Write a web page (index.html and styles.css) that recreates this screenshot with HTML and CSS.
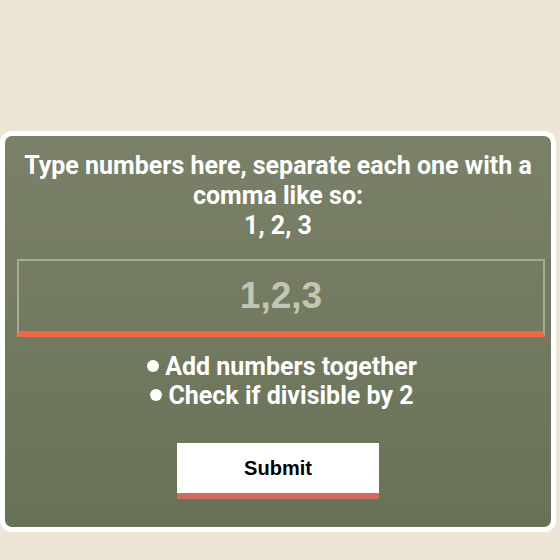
FILE: index.html
```html
<!DOCTYPE html>
<html>
<head>
<meta charset="utf-8">
<link rel="stylesheet" href="styles.css">
</head>
<body>
<div class="card">
  <h1 class="title">Type numbers here, separate each one with a comma like so:<br>1, 2, 3</h1>
  <input class="numbers" type="text" placeholder="1,2,3">
  <ul class="ops">
    <li>Add numbers together</li>
    <li>Check if divisible by 2</li>
  </ul>
  <div class="actions"><button class="submit">Submit</button></div>
</div>
</body>
</html>
```
FILE: styles.css
```css
html, body { margin: 0; padding: 0; }
body {
  background: #ede6d7;
  width: 560px;
  height: 560px;
  overflow: hidden;
  font-family: Roboto, "Liberation Sans", sans-serif;
}
.card {
  margin: 131px 4px 0 0;
  border: 5px solid #ffffff;
  border-radius: 12px;
  background: linear-gradient(#7b8169, #687257);
  padding: 15px 0 28px;
  color: #ffffff;
  text-align: center;
}
.title {
  margin: 0 0 18px;
  font-size: 25px;
  line-height: 30px;
  font-weight: 700;
}
.numbers {
  display: block;
  box-sizing: border-box;
  margin: 0 0 0 12px;
  width: 528px;
  height: 78px;
  border: 2px solid #a6aa93;
  border-bottom: 6px solid #ee6941;
  background: transparent;
  text-align: center;
  font-family: "Liberation Sans", Arial, sans-serif;
  font-weight: 700;
  font-size: 37px;
  color: #fff;
  outline: none;
  padding: 0;
}
.numbers::placeholder { color: #c3c6b4; opacity: 1; }
.ops {
  list-style: none;
  margin: 15px 0 0;
  padding: 0 0 0 8px;
  font-size: 25px;
  line-height: 29px;
  font-weight: 700;
}
.ops li::before {
  content: "";
  display: inline-block;
  width: 12px;
  height: 12px;
  border-radius: 50%;
  background: #ffffff;
  margin-right: 6px;
  vertical-align: 3px;
}
.actions {
  margin-top: 33px;
  display: flex;
  justify-content: center;
}
.submit {
  width: 202px;
  height: 56px;
  box-sizing: border-box;
  border: 0;
  border-bottom: 6px solid #d46a5f;
  background: #ffffff;
  font-family: "Liberation Sans", Arial, sans-serif;
  font-weight: 700;
  font-size: 20px;
  color: #000;
  padding: 0;
}
```
